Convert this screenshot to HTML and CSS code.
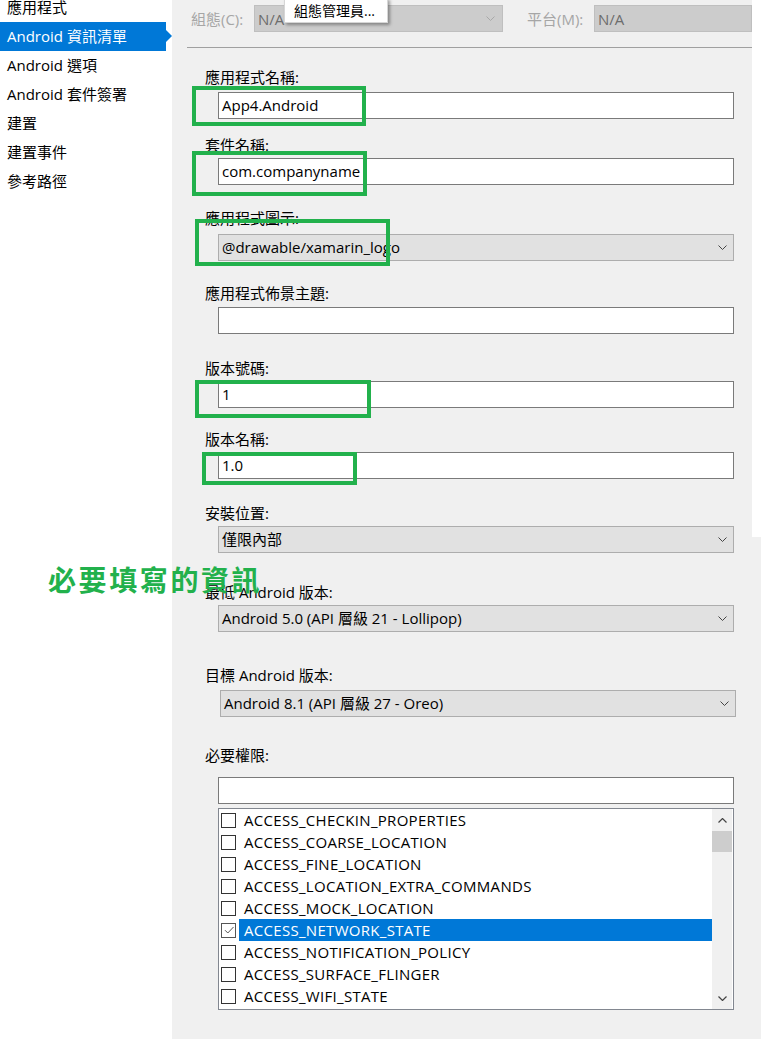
FILE: index.html
```html
<!DOCTYPE html>
<html lang="zh-Hant">
<head>
<meta charset="utf-8">
<title>Android 資訊清單</title>
<link rel="stylesheet" href="styles.css">
</head>
<body>
<div class="app">
  <nav class="sidebar">
    <ul class="nav">
      <li class="nav-item">應用程式</li>
      <li class="nav-item active">Android 資訊清單</li>
      <li class="nav-item">Android 選項</li>
      <li class="nav-item">Android 套件簽署</li>
      <li class="nav-item">建置</li>
      <li class="nav-item">建置事件</li>
      <li class="nav-item">參考路徑</li>
    </ul>
  </nav>
  <main class="panel">
    <div class="toolbar">
      <span class="tb-label">組態(C):</span>
      <div class="tb-box tb-config"><span>N/A</span>
        <svg class="chev" width="9" height="5" viewBox="0 0 9 5"><path d="M0.5 0.5 L4.5 4.5 L8.5 0.5" fill="none" stroke="#a8a8a8" stroke-width="1"/></svg>
      </div>
      <span class="tb-label tb-platform-label">平台(M):</span>
      <div class="tb-box tb-platform"><span>N/A</span></div>
    </div>
    <div class="sep"></div>
    <form class="form">
      <div class="field f-name">
        <label class="lbl">應用程式名稱:</label>
        <div class="input">App4.Android</div>
      </div>
      <div class="field f-pkg">
        <label class="lbl">套件名稱:</label>
        <div class="input">com.companyname</div>
      </div>
      <div class="field f-icon">
        <label class="lbl">應用程式圖示:</label>
        <div class="select"><span>@drawable/xamarin_logo</span>
          <svg class="chev" width="9" height="5" viewBox="0 0 9 5"><path d="M0.5 0.5 L4.5 4.5 L8.5 0.5" fill="none" stroke="#444" stroke-width="1"/></svg>
        </div>
      </div>
      <div class="field f-theme">
        <label class="lbl">應用程式佈景主題:</label>
        <div class="input"></div>
      </div>
      <div class="field f-vcode">
        <label class="lbl">版本號碼:</label>
        <div class="input">1</div>
      </div>
      <div class="field f-vname">
        <label class="lbl">版本名稱:</label>
        <div class="input">1.0</div>
      </div>
      <div class="field f-loc">
        <label class="lbl">安裝位置:</label>
        <div class="select"><span>僅限內部</span>
          <svg class="chev" width="9" height="5" viewBox="0 0 9 5"><path d="M0.5 0.5 L4.5 4.5 L8.5 0.5" fill="none" stroke="#444" stroke-width="1"/></svg>
        </div>
      </div>
      <div class="field f-min">
        <label class="lbl">最低 Android 版本:</label>
        <div class="select"><span>Android 5.0 (API 層級 21 - Lollipop)</span>
          <svg class="chev" width="9" height="5" viewBox="0 0 9 5"><path d="M0.5 0.5 L4.5 4.5 L8.5 0.5" fill="none" stroke="#444" stroke-width="1"/></svg>
        </div>
      </div>
      <div class="field f-target">
        <label class="lbl">目標 Android 版本:</label>
        <div class="select select-shift"><span>Android 8.1 (API 層級 27 - Oreo)</span>
          <svg class="chev" width="9" height="5" viewBox="0 0 9 5"><path d="M0.5 0.5 L4.5 4.5 L8.5 0.5" fill="none" stroke="#444" stroke-width="1"/></svg>
        </div>
      </div>
      <div class="field f-perm">
        <label class="lbl">必要權限:</label>
        <div class="input"></div>
        <div class="list">
          <ul class="rows">
            <li class="row"><span class="cb"></span><span class="rt">ACCESS_CHECKIN_PROPERTIES</span></li>
            <li class="row"><span class="cb"></span><span class="rt">ACCESS_COARSE_LOCATION</span></li>
            <li class="row"><span class="cb"></span><span class="rt">ACCESS_FINE_LOCATION</span></li>
            <li class="row"><span class="cb"></span><span class="rt">ACCESS_LOCATION_EXTRA_COMMANDS</span></li>
            <li class="row"><span class="cb"></span><span class="rt">ACCESS_MOCK_LOCATION</span></li>
            <li class="row selected"><span class="cb"><svg width="12" height="12" viewBox="0 0 12 12"><path d="M2 6.2 L4.8 9 L10.5 3" fill="none" stroke="#555" stroke-width="1"/></svg></span><span class="rt">ACCESS_NETWORK_STATE</span></li>
            <li class="row"><span class="cb"></span><span class="rt">ACCESS_NOTIFICATION_POLICY</span></li>
            <li class="row"><span class="cb"></span><span class="rt">ACCESS_SURFACE_FLINGER</span></li>
            <li class="row"><span class="cb"></span><span class="rt">ACCESS_WIFI_STATE</span></li>
          </ul>
          <div class="scrollbar">
            <div class="sb-btn"><svg width="9" height="5" viewBox="0 0 9 5"><path d="M0.5 4.5 L4.5 0.5 L8.5 4.5" fill="none" stroke="#444" stroke-width="1.2"/></svg></div>
            <div class="sb-thumb"></div>
            <div class="sb-track"></div>
            <div class="sb-btn"><svg width="9" height="5" viewBox="0 0 9 5"><path d="M0.5 0.5 L4.5 4.5 L8.5 0.5" fill="none" stroke="#444" stroke-width="1.2"/></svg></div>
          </div>
        </div>
      </div>
    </form>
  </main>
</div>
<div class="popup">組態管理員...</div>
<div class="mark mark-1"></div>
<div class="mark mark-2"></div>
<div class="mark mark-3"></div>
<div class="mark mark-4"></div>
<div class="mark mark-5"></div>
<div class="note">必要填寫的資訊</div>
</body>
</html>
```
FILE: styles.css
```css
* { box-sizing: border-box; }
html, body { margin: 0; padding: 0; }
body {
  width: 761px;
  height: 1039px;
  overflow: hidden;
  background: #fff;
  font-family: "Open Sans", "Noto Sans CJK TC", sans-serif;
  font-size: 15px;
  color: #000;
  position: relative;
}
.app { display: flex; height: 1039px; }

.sidebar { width: 172px; flex: none; background: #fff; }
.nav { list-style: none; margin: -7px 0 0 0; padding: 0; }
.nav-item {
  height: 29px;
  line-height: 29px;
  padding-left: 7px;
  font-size: 15px;
  white-space: nowrap;
  width: 166px;
  position: relative;
}
.nav-item.active { background: #0078d7; color: #fff; }
.nav-item.active::after {
  content: "";
  position: absolute;
  right: -6px;
  top: 8px;
  border-left: 6px solid #0078d7;
  border-top: 6px solid transparent;
  border-bottom: 6px solid transparent;
}

.panel {
  flex: 1;
  background: linear-gradient(#fff, #fff) no-repeat right top / 9px 537px, #f0f0f0;
  padding-top: 5px;
}
.toolbar { display: flex; align-items: center; height: 27px; padding-left: 19px; }
.tb-label { color: #a6a6a6; width: 63px; white-space: nowrap; }
.tb-box {
  height: 27px;
  background: #cccccc;
  border: 1px solid #bfbfbf;
  color: #6d6d6d;
  display: flex;
  align-items: center;
  justify-content: space-between;
  padding: 0 7px 0 3px;
}
.tb-config { width: 249px; }
.tb-platform-label { margin-left: 24px; width: 67px; }
.tb-platform { width: 158px; }

.sep { margin: 15px 0 0 15px; width: 565px; border-top: 1px solid #a0a0a0; }

.form { padding-left: 33px; }
.lbl { display: block; height: 18px; line-height: 18px; white-space: nowrap; }
.input, .select {
  margin-left: 13px;
  width: 516px;
  height: 27px;
  line-height: 25px;
  padding: 0 3px;
  white-space: nowrap;
}
.input { background: #fff; border: 1px solid #7a7a7a; }
.select {
  background: #e1e1e1;
  border: 1px solid #adadad;
  display: flex;
  align-items: center;
  justify-content: space-between;
  padding-right: 6px;
}
.select-shift { margin-left: 15px; }

.f-name { margin-top: 20px; }   .f-name .input { margin-top: 6px; }
.f-pkg { margin-top: 17px; }    .f-pkg .input { margin-top: 4px; }
.f-icon { margin-top: 24px; }   .f-icon .select { margin-top: 7px; }
.f-theme { margin-top: 23px; }  .f-theme .input { margin-top: 5px; }
.f-vcode { margin-top: 25px; }  .f-vcode .input { margin-top: 4px; }
.f-vname { margin-top: 22px; }  .f-vname .input { margin-top: 4px; }
.f-loc { margin-top: 25px; }    .f-loc .select { margin-top: 4px; }
.f-min { margin-top: 30px; }    .f-min .select { margin-top: 4px; }
.f-target { margin-top: 34px; } .f-target .select { margin-top: 6px; }
.f-perm { margin-top: 29px; }   .f-perm .input { margin-top: 13px; }

.list {
  margin: 4px 0 0 13px;
  width: 516px;
  height: 202px;
  border: 1px solid #828790;
  background: #fff;
  display: flex;
}
.rows { list-style: none; margin: 0; padding: 0; flex: 1; }
.row { height: 22px; display: flex; align-items: center; white-space: nowrap; }
.cb {
  width: 15px; height: 15px;
  margin-left: 2px;
  border: 1px solid #333;
  background: #fff;
  flex: none;
  display: flex; align-items: center; justify-content: center;
}
.rt { margin-left: 3px; padding-left: 5px; height: 22px; line-height: 22px; flex: 1; letter-spacing: 0.3px; }
.row.selected .rt { background: #0078d7; color: #fff; }
.row.selected .cb { border-color: #555; }

.scrollbar { width: 20px; background: #f0f0f0; display: flex; flex-direction: column; margin-right: 1px; }
.sb-btn { height: 22px; display: flex; align-items: center; justify-content: center; flex: none; }
.sb-thumb { height: 21px; background: #cdcdcd; flex: none; }
.sb-track { flex: 1; }

.popup {
  position: absolute;
  left: 284px; top: -2px;
  width: 104px; height: 25px;
  background: #fff;
  border: 1px solid #d6d6d6;
  box-shadow: 2px 2px 3px rgba(0,0,0,0.35);
  padding: 2px 0 0 9px;
  line-height: 20px;
  font-size: 14px;
  white-space: nowrap;
}
.mark { position: absolute; border: 4px solid #22b14c; }
.mark-1 { left: 192px; top: 86px; width: 174px; height: 40px; }
.mark-2 { left: 192px; top: 151px; width: 175px; height: 45px; }
.mark-3 { left: 195px; top: 219px; width: 195px; height: 47px; }
.mark-4 { left: 195px; top: 380px; width: 176px; height: 38px; }
.mark-5 { left: 202px; top: 452px; width: 155px; height: 33px; }
.note {
  position: absolute;
  left: 48px; top: 563px;
  font-family: "Noto Sans CJK TC", sans-serif;
  font-weight: 700;
  font-size: 28px;
  line-height: 32px;
  letter-spacing: 2.6px;
  color: #22b14c;
  white-space: nowrap;
}
```
